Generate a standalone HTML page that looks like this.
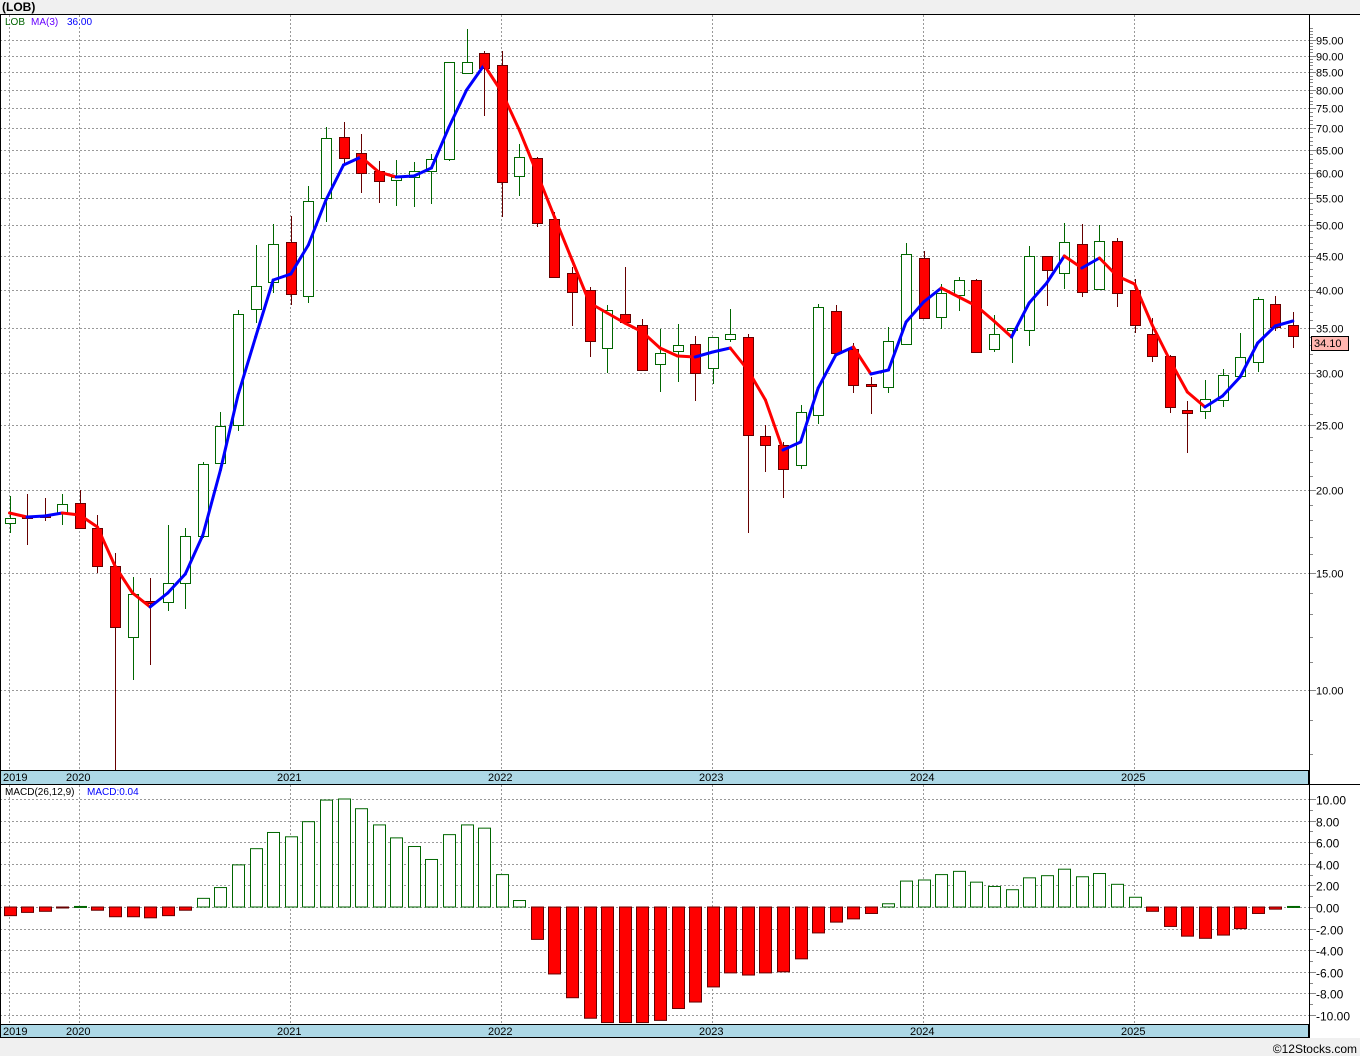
<!DOCTYPE html>
<html><head><meta charset="utf-8"><style>
html,body{margin:0;padding:0;background:#f0f0f0;}
body{width:1360px;height:1056px;overflow:hidden;font-family:"Liberation Sans",Verdana,sans-serif;}
svg{display:block}
</style></head><body>
<svg id="s" width="1360" height="1056" xmlns="http://www.w3.org/2000/svg" font-family="Liberation Sans, sans-serif">
<rect x="0" y="0" width="1360" height="1056" fill="#f0f0f0"/>
<text x="2" y="11" font-size="12" font-weight="bold" fill="#000">(LOB)</text>
<rect x="0" y="14" width="1360" height="1024" fill="#fff"/>
<g id="g"></g>
</svg>
<script>
var NS="http://www.w3.org/2000/svg",g=document.getElementById('g');
function el(t,a,txt){var e=document.createElementNS(NS,t);for(var k in a)e.setAttribute(k,a[k]);if(txt!==undefined)e.textContent=txt;g.appendChild(e);return e;}
function py(p){return 690-(Math.log10(p)-1)*664.8;}
function my(v){return 907-v*10.8;}
var years=[[9,"2019"],[79,"2020"],[290,"2021"],[501,"2022"],[712,"2023"],[923,"2024"],[1134,"2025"]];
var pl=[95,90,85,80,75,70,65,60,55,50,45,40,35,30,25,20,15,10];
pl.forEach(function(p){var y=Math.round(py(p))+.5;el('line',{x1:0,x2:1309,y1:y,y2:y,stroke:'#999','stroke-dasharray':'2,2','stroke-width':1});
el('line',{x1:1309,x2:1316,y1:y,y2:y,stroke:'#888'});
el('text',{x:1316,y:y+4,'font-size':11,fill:'#000'},p.toFixed(2));});
for(var p=8;p<100;p+=1){if(p%5==0)continue;var y=Math.round(py(p))+.5;if(y<16||y>768)continue;el('line',{x1:1309,x2:1313,y1:y,y2:y,stroke:'#888'});}
years.forEach(function(v){el('line',{x1:v[0]+.5,x2:v[0]+.5,y1:15,y2:770,stroke:'#999','stroke-dasharray':'2,2'});el('line',{x1:v[0]+.5,x2:v[0]+.5,y1:785,y2:1024,stroke:'#999','stroke-dasharray':'2,2'});});
for(var v=10;v>=-10;v-=2){var y=Math.round(my(v))+.5;el('line',{x1:0,x2:1309,y1:y,y2:y,stroke:'#999','stroke-dasharray':'2,2'});el('line',{x1:1309,x2:1316,y1:y,y2:y,stroke:'#888'});
el('text',{x:1316,y:y+5,'font-size':12,fill:'#000'},(v<0?'-':'')+Math.abs(v).toFixed(2));
var y2=Math.round(my(v-1))+.5;if(v>-10)el('line',{x1:1309,x2:1313,y1:y2,y2:y2,stroke:'#888'});}
var C=[['u',518,523,496,533],['d',516,518,494,545],['d',515,517,498,521],['u',504,513,494,525],['d',503,528,490,529],['d',528,566,515,573],['d',566,627,553,770],['u',594,637,577,680],['d',601,603,578,665],['u',583,602,525,611],['u',536,583,528,609],['u',464,536,462,538],['u',426,463,412,464],['u',314,425,310,431],['u',286,309,245,323],['u',244,282,224,293],['d',242,294,216,305],['u',201,296,186,303],['u',138,198,127,222],['d',137,158,122,165],['d',153,173,134,193],['d',171,181,161,203],['u',177,180,160,206],['u',171,177,162,207],['u',159,171,154,204],['u',62,159,62,161],['u',62,73,29,73],['d',53,68,51,116],['d',65,182,51,217],['u',157,176,144,196],['d',158,223,157,227],['d',219,277,212,278],['d',273,292,267,326],['d',290,341,287,357],['u',310,348,305,373],['d',314,322,267,322],['d',325,370,319,370],['u',353,364,329,392],['u',345,351,324,382],['d',344,373,336,401],['u',337,368,337,384],['u',334,339,309,342],['d',337,435,334,533],['d',436,445,425,472],['d',445,469,442,498],['u',412,465,405,469],['u',307,415,304,424],['d',311,353,305,353],['d',349,385,343,393],['d',384,386,377,414],['u',341,387,327,393],['u',254,344,243,344],['d',258,318,251,318],['u',293,317,284,329],['u',280,295,277,311],['d',280,352,279,352],['u',334,349,315,352],['u',328,330,328,363],['u',256,330,246,346],['d',256,270,256,306],['u',242,273,223,289],['d',244,292,224,297],['u',241,289,225,289],['d',241,293,238,307],['d',290,325,279,333],['d',334,356,318,362],['d',356,407,355,413],['d',410,413,401,453],['u',399,411,380,419],['u',375,400,369,407],['u',357,376,333,376],['u',299,362,297,372],['d',304,327,296,331],['d',325,336,312,348]];
var MA=[513,517,516,513,515,527,566,593,607,593,574,535,470,395,337,280,274,245,200,165,157,172,177,176,168,127,90,65,92,130,173,217,260,303,313,323,332,348,356,357,352,348,370,400,450,442,388,355,347,374,370,322,302,288,297,306,321,337,303,283,256,268,258,276,284,325,360,392,407,396,377,343,326,321];
var M=[-.8,-.5,-.4,-.05,.05,-.3,-.9,-.9,-1,-.8,-.3,.8,1.8,3.9,5.4,6.9,6.5,7.9,9.9,10,9.1,7.6,6.4,5.6,4.4,6.7,7.6,7.3,3,.6,-3,-6.2,-8.4,-10.3,-10.7,-10.7,-10.7,-10.5,-9.4,-8.8,-7.4,-6.1,-6.3,-6.1,-6,-4.8,-2.4,-1.4,-1.1,-.6,.3,2.4,2.5,3,3.3,2.3,1.9,1.6,2.7,2.9,3.5,2.8,3.1,2.1,.9,-.4,-1.8,-2.7,-2.9,-2.6,-2,-.6,-.2,.05];
function cx(i){return 9.5+17.58*i;}
C.forEach(function(c,i){var x=Math.round(cx(i))+.5,up=c[0]=='u',wc=up?'#006600':'#660000';
el('line',{x1:x,x2:x,y1:c[3],y2:c[4],stroke:wc,'stroke-width':1});
var h=Math.max(c[2]-c[1],1);el('rect',{x:x-5,y:c[1]+.5,width:10,height:h,fill:up?'#fff':'#ff0000',stroke:wc,'stroke-width':1});});
for(var i=1;i<MA.length;i++){el('line',{x1:cx(i-1),y1:MA[i-1],x2:cx(i),y2:MA[i],stroke:MA[i]<MA[i-1]?'#0000ff':'#ff0000','stroke-width':3,'stroke-linecap':'round'});}
M.forEach(function(v,i){var x=Math.round(cx(i))-6+.5,y0=907,y1=my(v);var t=Math.min(y0,y1),h=Math.max(Math.abs(y1-y0),1);
el('rect',{x:x,y:t,width:12,height:h,fill:v<0?'#ff0000':'#fff',stroke:v<0?'#660000':'#006600','stroke-width':1});});
el('rect',{x:0.5,y:770.5,width:1308,height:14,fill:'#add8e6',stroke:'#000'});
el('rect',{x:0.5,y:1024.5,width:1308,height:13,fill:'#add8e6',stroke:'#000'});
el('line',{x1:0,x2:1360,y1:14.5,y2:14.5,stroke:'#000'});
el('line',{x1:1309.5,x2:1309.5,y1:14,y2:1038,stroke:'#000'});
el('line',{x1:0.5,x2:0.5,y1:14,y2:1038,stroke:'#000'});
el('line',{x1:1309,x2:1360,y1:784.5,y2:784.5,stroke:'#000'});
years.forEach(function(v){var x=v[0]==9?3:v[0]-13;el('text',{x:x,y:781,'font-size':11,fill:'#000'},v[1]);el('text',{x:x,y:1035,'font-size':11,fill:'#000'},v[1]);});
el('rect',{x:1311.5,y:336.5,width:37,height:14,fill:'#ffb6b0',stroke:'#000'});
el('text',{x:1314,y:347,'font-size':11,fill:'#000'},'34.10');
el('text',{x:5,y:25,'font-size':10,fill:'#006400'},'LOB');
el('text',{x:31,y:25,'font-size':10,fill:'#6600ff'},'MA(3)');
el('text',{x:67,y:25,'font-size':10,fill:'#0000ff'},'36.00');
el('text',{x:5,y:795,'font-size':10,fill:'#000'},'MACD(26,12,9)');
el('text',{x:87,y:795,'font-size':10,fill:'#0000ff'},'MACD:0.04');
el('rect',{x:0,y:1038,width:1360,height:18,fill:'#f0f0f0'});
el('text',{x:1357,y:1053,'font-size':12,fill:'#000','text-anchor':'end'},'\u00a912Stocks.com');
</script>
</body></html>
